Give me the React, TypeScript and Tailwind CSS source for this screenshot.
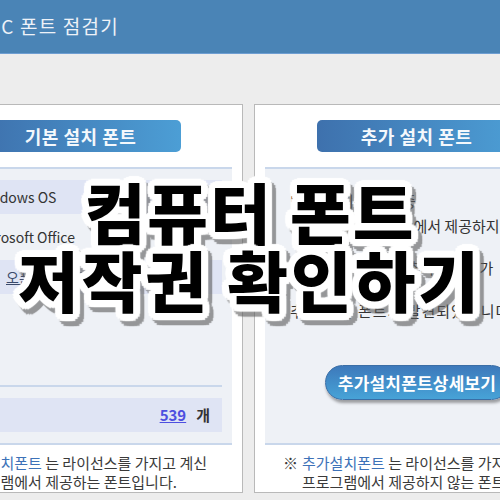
import React from "react";

const outline =
  "[text-shadow:7px_0_1px_#fff,6.5px_2.7px_1px_#fff,4.9px_4.9px_1px_#fff,2.7px_6.5px_1px_#fff,0_7px_1px_#fff,-2.7px_6.5px_1px_#fff,-4.9px_4.9px_1px_#fff,-6.5px_2.7px_1px_#fff,-7px_0_1px_#fff,-6.5px_-2.7px_1px_#fff,-4.9px_-4.9px_1px_#fff,-2.7px_-6.5px_1px_#fff,0_-7px_1px_#fff,2.7px_-6.5px_1px_#fff,4.9px_-4.9px_1px_#fff,6.5px_-2.7px_1px_#fff,3.5px_0_0_#fff,0_3.5px_0_#fff,-3.5px_0_0_#fff,0_-3.5px_0_#fff]";

function Pill({ label }: { label: string }) {
  return (
    <div className="w-[200px] h-[32px] rounded-[5px] bg-gradient-to-r from-[#3e71ad] to-[#4c9ed5] flex items-center justify-center text-[#f4f8fc] text-[18px] font-bold tracking-[0.5px]">
      {label}
    </div>
  );
}

function Note({ kind, second, pl }: { kind: string; second: string; pl: string }) {
  return (
    <div className={`self-stretch mt-[8px] text-[15px] leading-[19px] text-[#3a3a3a] whitespace-nowrap ${pl}`}>
      <div className="flex">
        <span className="w-[19px]">※</span>
        <span>
          <span className="text-[#3d72b8]">{kind}</span> 는 라이선스를 가지고 계신
        </span>
      </div>
      <div className="pl-[19px]">{second}</div>
    </div>
  );
}

export default function App() {
  return (
    <div className="relative w-[500px] h-[500px] overflow-hidden bg-[#ededed] font-['Noto_Sans_CJK_KR',sans-serif]">
      <header className="h-[54px] bg-[#4a84b6] border-b border-[#6e9ed2] flex items-center">
        <span className="ml-[-12px] text-[19px] text-[#eef2f8] tracking-[1.2px]">PC 폰트 점검기</span>
      </header>

      <div className="flex gap-[11px] ml-[-82px] mt-[50px]">
        {/* left panel */}
        <section className="w-[325px] h-[389px] shrink-0 border border-[#b9b9b9] bg-white flex flex-col items-center pt-[15px]">
          <Pill label="기본 설치 폰트" />
          <div className="self-stretch mx-[10px] mt-[15px] h-[278px] border-y-2 border-[#c9d7eb] bg-[#eef1f6] flex flex-col pt-[11px] pb-[11px]">
            <div className="flex flex-col gap-[6px] mx-[10px] text-[14px] text-[#333]">
              <div className="h-[34px] bg-[#dfe4f4] flex items-center pl-[36px]">Windows OS</div>
              <div className="h-[34px] flex items-center pl-[34px]">Microsoft Office</div>
              <div className="h-[34px] bg-[#dfe4f4] flex items-center pl-[67px]">
                <span className="underline text-[#3b4a6b]">오픈소스 폰트</span>
              </div>
            </div>
            <div className="mt-auto mx-[10px]">
              <div className="h-[2px] bg-[#c9d7eb]" />
              <div className="mt-[11px] h-[34px] bg-[#dfe4f4] flex items-center justify-end pr-[12px] text-[15px]">
                <span className="underline text-[#4d4fe0] font-bold">539</span>
                <span className="ml-[10px] text-[#333] font-bold">개</span>
              </div>
            </div>
          </div>
          <Note kind="기본설치폰트" second="프로그램에서 제공하는 폰트입니다." pl="pl-[21px]" />
        </section>

        {/* right panel */}
        <section className="w-[325px] h-[389px] shrink-0 border border-[#b9b9b9] bg-white flex flex-col items-center pt-[15px]">
          <Pill label="추가 설치 폰트" />
          <div className="self-stretch mx-[10px] mt-[15px] h-[278px] border-y-2 border-[#c9d7eb] bg-[#eef1f6] flex flex-col pt-[19px] pl-[25px] text-[15px] text-[#333] leading-[25px] whitespace-nowrap">
            <div>PC에 설치된 폰트 중</div>
            <div>윈도우 OS와 오피스에서 제공하지 않는</div>
            <div className="mt-[17px]">설치 프로그램에서 추가된 폰트가</div>
            <div className="mt-[18px] tracking-[1px]">추가 설치 폰트가 발견되었습니다.</div>
            <div className="mt-[42px] self-start ml-[35px] w-[184px] h-[35px] rounded-full bg-gradient-to-b from-[#3d79bb] to-[#47a3d7] border border-[#3a6ea6] shadow-[1px_3px_3px_rgba(0,0,0,0.35)] flex items-center justify-center text-white text-[17px] font-bold tracking-[0.2px]">
              추가설치폰트상세보기
            </div>
          </div>
          <Note kind="추가설치폰트" second="프로그램에서 제공하지 않는 폰트입니다." pl="pl-[28px]" />
        </section>
      </div>

      {/* overlay title */}
      <div className="absolute left-0 right-0 top-[176px] flex flex-col items-center drop-shadow-[4px_5px_0_rgba(90,90,90,0.6)]">
        <div className={`text-black font-black text-[66px] leading-[68px] tracking-[2px] whitespace-nowrap ${outline}`}>
          컴퓨터 폰트
        </div>
        <div className={`text-black font-black text-[66px] leading-[68px] tracking-[3px] whitespace-nowrap ${outline}`}>
          저작권 확인하기
        </div>
      </div>
    </div>
  );
}
